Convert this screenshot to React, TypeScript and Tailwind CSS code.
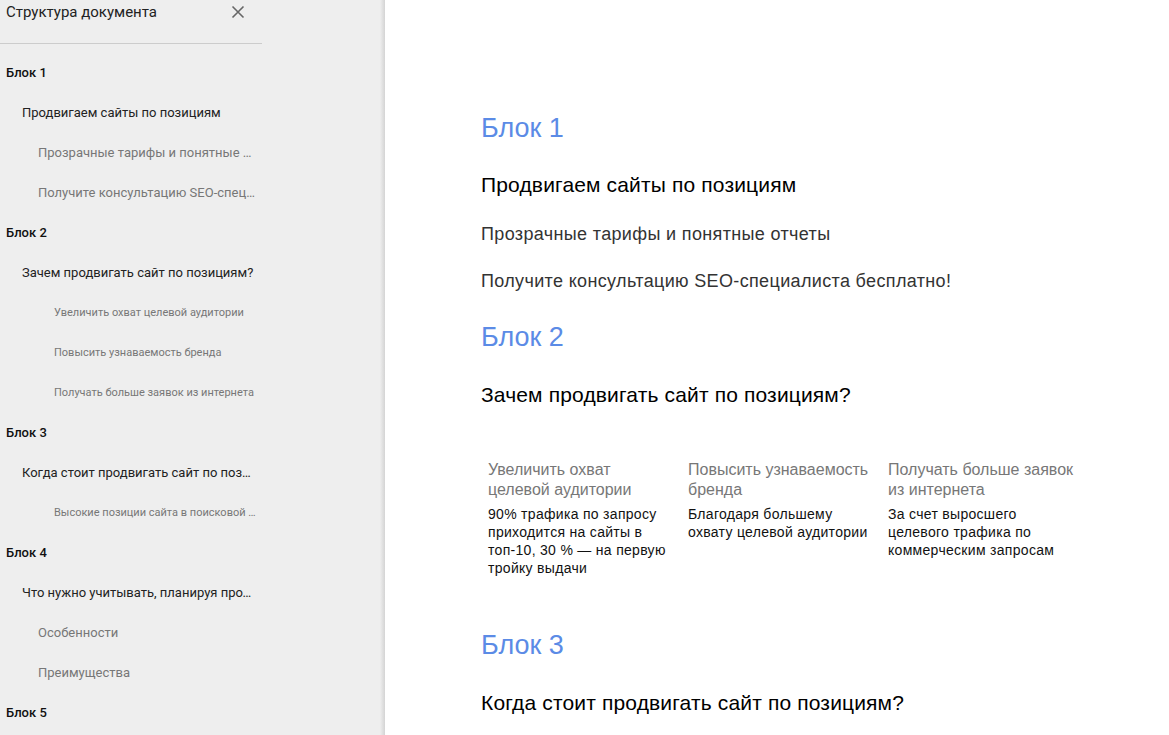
import React from "react";

type Item = { text: string; level: number };

const items: Item[] = [
  { text: "Блок 1", level: 1 },
  { text: "Продвигаем сайты по позициям", level: 2 },
  { text: "Прозрачные тарифы и понятные отчеты", level: 3 },
  { text: "Получите консультацию SEO-специалиста бесплатно!", level: 3 },
  { text: "Блок 2", level: 1 },
  { text: "Зачем продвигать сайт по позициям?", level: 2 },
  { text: "Увеличить охват целевой аудитории", level: 4 },
  { text: "Повысить узнаваемость бренда", level: 4 },
  { text: "Получать больше заявок из интернета", level: 4 },
  { text: "Блок 3", level: 1 },
  { text: "Когда стоит продвигать сайт по позициям?", level: 2 },
  { text: "Высокие позиции сайта в поисковой выдаче", level: 4 },
  { text: "Блок 4", level: 1 },
  { text: "Что нужно учитывать, планируя продвижение?", level: 2 },
  { text: "Особенности", level: 3 },
  { text: "Преимущества", level: 3 },
  { text: "Блок 5", level: 1 },
];

function Row({ item }: { item: Item }) {
  const cls =
    item.level === 1
      ? "pl-[6px] text-[13px] font-medium text-[#111]"
      : item.level === 2
      ? "pl-[22px] text-[13px] text-[#222]"
      : item.level === 3
      ? "pl-[38px] text-[13px] text-[#777]"
      : "pl-[54px] text-[11px] text-[#777]";
  return (
    <div className="h-[40px] flex items-center pr-[4px]">
      <div className={"truncate w-full " + cls}>{item.text}</div>
    </div>
  );
}

const columns = [
  {
    head: ["Увеличить охват", "целевой аудитории"],
    body: ["90% трафика по запросу", "приходится на сайты в", "топ-10, 30 % — на первую", "тройку выдачи"],
  },
  {
    head: ["Повысить узнаваемость", "бренда"],
    body: ["Благодаря большему", "охвату целевой аудитории"],
  },
  {
    head: ["Получать больше заявок", "из интернета"],
    body: ["За счет выросшего", "целевого трафика по", "коммерческим запросам"],
  },
];

export default function App() {
  return (
    <div className="flex w-[1169px] h-[735px] overflow-hidden bg-white">
      <aside
        className="flex w-[385px] shrink-0 h-full bg-[#eeeeee]"
        style={{ fontFamily: "Roboto, 'Noto Sans', sans-serif" }}
      >
        <div className="flex-1">
          <div className="w-[262px]">
            <div className="h-[44px] border-b border-[#cccccc] flex items-start justify-between pl-[6px] pr-[12px]">
              <span className="text-[15px] leading-[24px] text-[#222]">Структура документа</span>
              <svg width="24" height="24" viewBox="0 0 24 24">
                <path d="M6.5 6.5 L17.5 17.5 M17.5 6.5 L6.5 17.5" stroke="#666" strokeWidth="1.6" fill="none" />
              </svg>
            </div>
            <div className="pt-[9px]">
              {items.map((it, i) => (
                <Row key={i} item={it} />
              ))}
            </div>
          </div>
        </div>
        <div className="w-[5px] h-full bg-gradient-to-r from-[#eeeeee] to-[#d4d4d4]" />
      </aside>
      <main
        className="flex-1 pl-[96px] pt-[112px]"
        style={{ fontFamily: "'Liberation Sans', Arial, sans-serif" }}
      >
        <h1 className="text-[27px] leading-[32px] text-[#5b8be6]">Блок 1</h1>
        <h2 className="mt-[29px] text-[21px] leading-[24px] tracking-[0.15px] text-black">
          Продвигаем сайты по позициям
        </h2>
        <p className="mt-[26px] text-[18px] leading-[22px] tracking-[0.35px] text-[#333]">
          Прозрачные тарифы и понятные отчеты
        </p>
        <p className="mt-[25px] text-[18px] leading-[22px] tracking-[0.35px] text-[#333]">
          Получите консультацию SEO-специалиста бесплатно!
        </p>
        <h1 className="mt-[29px] text-[27px] leading-[32px] text-[#5b8be6]">Блок 2</h1>
        <h2 className="mt-[30px] text-[21px] leading-[24px] tracking-[0.15px] text-black">
          Зачем продвигать сайт по позициям?
        </h2>
        <div className="mt-[53px] pl-[7px] flex">
          {columns.map((c, i) => (
            <div key={i} className="w-[200px] shrink-0">
              <div className="text-[16px] leading-[20px] text-[#777]">
                {c.head.map((l, j) => (
                  <div key={j} className="whitespace-nowrap">{l}</div>
                ))}
              </div>
              <div className="mt-[5px] text-[14px] leading-[18px] tracking-[0.3px] text-[#111]">
                {c.body.map((l, j) => (
                  <div key={j} className="whitespace-nowrap">{l}</div>
                ))}
              </div>
            </div>
          ))}
        </div>
        <h1 className="mt-[52px] text-[27px] leading-[32px] text-[#5b8be6]">Блок 3</h1>
        <h2 className="mt-[30px] text-[21px] leading-[24px] tracking-[0.15px] text-black">
          Когда стоит продвигать сайт по позициям?
        </h2>
      </main>
    </div>
  );
}
